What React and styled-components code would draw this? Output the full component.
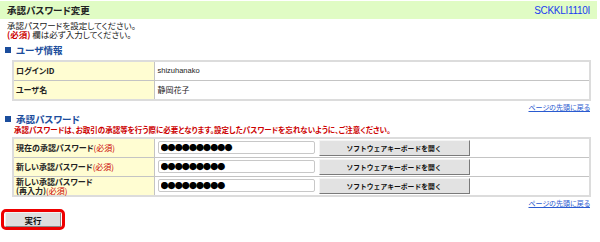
import React from "react";
import styled, { createGlobalStyle } from "styled-components";

const GlobalStyle = createGlobalStyle`
  body {
    margin: 0;
    background: #fff;
    font-family: "Noto Sans CJK JP", "Liberation Sans", sans-serif;
    font-feature-settings: "palt";
    font-size: 9px;
    color: #222;
  }
`;

const Page = styled.div`
  width: 600px;
  padding-top: 1px;
`;

const HeaderBar = styled.div`
  height: 18px;
  margin-right: 3px;
  background: #e0fcc4;
  display: flex;
  align-items: center;
  justify-content: space-between;
  padding: 0 7px 0 7px;
`;

const Title = styled.h1`
  margin: 0;
  font-size: 9.5px;
  font-weight: bold;
  color: #222;
`;

const ScreenId = styled.span`
  font-family: "Liberation Sans", Arial, sans-serif;
  font-size: 10px;
  color: #1a3cf0;
  letter-spacing: -0.3px;
`;

const Note = styled.div`
  margin-top: 2px;
  padding: 0 7px;
  line-height: 9px;
  font-size: 8.5px;
`;

const Req = styled.span`
  color: #cc0000;
  font-weight: ${(p) => (p.$bold ? "bold" : "normal")};
`;

const SectionTitle = styled.h2`
  margin: ${(p) => p.$top}px 0 0 5px;
  height: 12px;
  font-size: 9.5px;
  line-height: 12px;
  font-weight: bold;
  color: #1b4d9c;
  display: flex;
  align-items: center;
  gap: 5px;
  &::before {
    content: "";
    width: 6px;
    height: 6px;
    background: #1b4d9c;
  }
`;

const Warning = styled.div`
  height: 10px;
  margin-left: 14px;
  color: #cc0000;
  font-weight: bold;
  font-size: 7.5px;
  line-height: 10px;
  white-space: nowrap;
`;

const Table = styled.table`
  margin: ${(p) => p.$top}px 0 0 12px;
  width: 579px;
  border-collapse: collapse;
  border: 2px solid #dcdcdc;
`;

const Row = styled.tr`
  height: ${(p) => p.$h}px;
`;

const Label = styled.th`
  width: 141px;
  padding: 0 0 0 2px;
  background: #fffdd2;
  border: 1px solid #c4c4c4;
  text-align: left;
  font-weight: bold;
  font-size: 8px;
  line-height: 9px;
  color: #222;
  box-sizing: border-box;
`;

const Value = styled.td`
  padding: 0 0 0 3px;
  border: 1px solid #c4c4c4;
  font-size: ${(p) => (p.$latin ? 7.5 : 8)}px;
  line-height: 9px;
  font-family: ${(p) =>
    p.$latin ? '"Liberation Sans", Arial, sans-serif' : "inherit"};
`;

const FieldRow = styled.div`
  display: flex;
  align-items: center;
  gap: 4px;
`;

const PassInput = styled.input`
  width: 157px;
  height: 13px;
  box-sizing: border-box;
  border: 1px solid #c8c8c8;
  border-radius: 2px;
  padding: 0 2px;
  font-family: "Noto Sans CJK JP", sans-serif;
  font-feature-settings: normal;
  font-size: 8px;
  line-height: 11px;
  letter-spacing: -0.9px;
  color: #000;
  outline: none;
`;

const KeyboardButton = styled.button`
  width: 151px;
  height: 16px;
  box-sizing: border-box;
  background: #e2e2e2;
  border: 1px solid;
  border-color: #f4f4f4 #7a7a7a #7a7a7a #f4f4f4;
  font-family: inherit;
  font-size: 6.8px;
  font-weight: bold;
  color: #111;
  padding: 0;
`;

const BackLink = styled.a`
  display: block;
  width: max-content;
  height: 9px;
  margin: ${(p) => p.$top}px 10px 0 auto;
  color: #2a5bd0;
  font-size: 7px;
  line-height: 9px;
  text-decoration: underline;
`;

const SubmitFrame = styled.div`
  margin: 1px 0 0 1px;
  width: 64px;
  height: 21px;
  box-sizing: border-box;
  border: 3px solid #ee0000;
  border-radius: 5px;
  display: flex;
  align-items: center;
  justify-content: center;
`;

const SubmitButton = styled.button`
  width: 56px;
  height: 15px;
  box-sizing: border-box;
  background: #dedede;
  border: 1px solid;
  border-color: #f2f2f2 #8a8a8a #8a8a8a #f2f2f2;
  font-family: inherit;
  font-size: 8.5px;
  line-height: 12px;
  font-weight: bold;
  color: #111;
  padding: 0;
`;

const passwordRows = [
  { label: "現在の承認パスワード", dots: 10, h: 19 },
  { label: "新しい承認パスワード", dots: 9, h: 19 },
  { label: "新しい承認パスワード", sub: "(再入力)", dots: 9, h: 20 },
];

export default function App() {
  return (
    <Page>
      <GlobalStyle />
      <HeaderBar>
        <Title>承認パスワード変更</Title>
        <ScreenId>SCKKLI1110I</ScreenId>
      </HeaderBar>
      <Note>
        承認パスワードを設定してください。
        <br />
        <Req $bold>(必須)</Req> 欄は必ず入力してください。
      </Note>

      <SectionTitle $top={5}>ユーザ情報</SectionTitle>
      <Table $top={4}>
        <tbody>
          <Row $h={19}>
            <Label>ログインID</Label>
            <Value $latin>shizuhanako</Value>
          </Row>
          <Row $h={20}>
            <Label>ユーザ名</Label>
            <Value>静岡花子</Value>
          </Row>
        </tbody>
      </Table>
      <BackLink href="#" $top={2}>ページの先頭に戻る</BackLink>

      <SectionTitle $top={1}>承認パスワード</SectionTitle>
      <Warning>
        承認パスワードは、お取引の承認等を行う際に必要となります。設定したパスワードを忘れないように、ご注意ください。
      </Warning>
      <Table $top={2}>
        <tbody>
          {passwordRows.map((row, i) => (
            <Row key={i} $h={row.h}>
              <Label>
                {row.label}
                {row.sub && <br />}
                {row.sub}
                <Req>(必須)</Req>
              </Label>
              <Value>
                <FieldRow>
                  <PassInput readOnly value={"●".repeat(row.dots)} />
                  <KeyboardButton type="button">
                    ソフトウェアキーボードを開く
                  </KeyboardButton>
                </FieldRow>
              </Value>
            </Row>
          ))}
        </tbody>
      </Table>
      <BackLink href="#" $top={2}>ページの先頭に戻る</BackLink>

      <SubmitFrame>
        <SubmitButton type="button">実行</SubmitButton>
      </SubmitFrame>
    </Page>
  );
}
